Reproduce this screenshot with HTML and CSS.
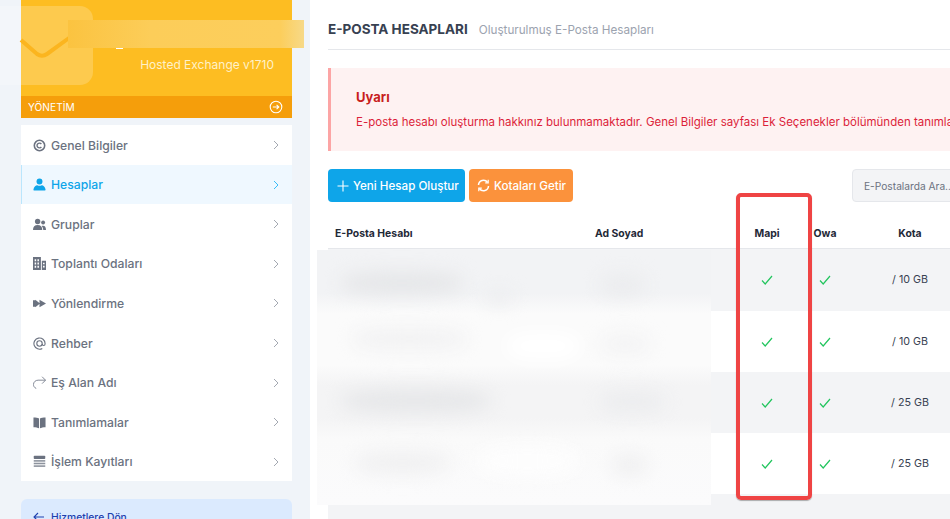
FILE: index.html
```html
<!DOCTYPE html>
<html lang="tr">
<head>
<meta charset="utf-8">
<title>E-Posta Hesapları</title>
<link rel="stylesheet" href="styles.css">
</head>
<body>
<div class="app">
  <aside class="side">
    <svg class="envelope" width="96" height="90" viewBox="0 0 96 90" aria-hidden="true">
      <rect x="-40" y="6" width="133" height="79" rx="13" fill="#fff" fill-opacity=".2"/>
      <path d="M21 40 L37 54 Q42 57.500 47 54 L69 38" fill="none" stroke="#fbb51f" stroke-width="4"/>
    </svg>
    <div class="blur-title"></div>
    <section class="brand">
      <div class="brand-top"><span class="brand-sub">Hosted Exchange v1710</span></div>
      <div class="brand-bar">
        <span>YÖNETİM</span>
        <svg width="14" height="14" viewBox="0 0 14 14" fill="none" stroke="#fff" stroke-width="1.100"><circle cx="7" cy="7" r="5.800"/><path d="M3.800 7h6M7.600 4.900 9.800 7 7.600 9.100"/></svg>
      </div>
    </section>
    <nav class="menu">
      <a class="item"><svg class="ic" viewBox="0 0 14 14" fill="none" stroke="#6b7280"><circle cx="7" cy="7" r="5.600" stroke-width="1.700"/><path d="M9 5.400A2.600 2.600 0 1 0 9 8.600" stroke-width="1.500"/></svg><span>Genel Bilgiler</span><svg class="chev" viewBox="0 0 6 10"><path d="M1 1l4 4-4 4"/></svg></a>
      <a class="item active"><svg class="ic" viewBox="0 0 14 14" fill="#0ea5e9"><circle cx="7" cy="3.800" r="3.200"/><path d="M1.500 13.500c-.8 0-1.100-.5-1-1.200C.9 9.600 2.800 7.800 4.600 7.800c.8.4 1.500.6 2.400.6s1.600-.2 2.400-.6c1.800 0 3.700 1.800 4.100 4.500.1.700-.2 1.200-1 1.200z"/></svg><span>Hesaplar</span><svg class="chev" viewBox="0 0 6 10"><path d="M1 1l4 4-4 4"/></svg></a>
      <a class="item"><svg class="ic" viewBox="0 0 14 14" fill="#6b7280"><circle cx="5" cy="3.800" r="2.900"/><circle cx="10.900" cy="4.800" r="2.100"/><path d="M0 12.800c0-3.600 1.800-5.300 5-5.300s5 1.700 5 5.300z"/><path d="M11 12.800h3c0-2.900-1.100-4.500-3.200-4.500-.6 0-1.100.1-1.500.3.900 1 1.700 2.500 1.700 4.200z"/></svg><span>Gruplar</span><svg class="chev" viewBox="0 0 6 10"><path d="M1 1l4 4-4 4"/></svg></a>
      <a class="item"><svg class="ic" viewBox="0 0 14 14"><path fill="#6b7280" fill-rule="evenodd" d="M0 0h8.500v14H0zM1.800 2.500v2H3.400v-2zM4.800 2.500v2h1.600v-2zM1.800 6v2H3.400V6zM4.800 6v2h1.600V6zM1.800 9.500v2H3.400v-2zM4.800 9.500v2h1.600v-2zM9.500 4H14v10H9.500zM10.800 6.200v1.700h1.700V6.200zM10.800 9.500v1.700h1.700V9.500z"/></svg><span>Toplantı Odaları</span><svg class="chev" viewBox="0 0 6 10"><path d="M1 1l4 4-4 4"/></svg></a>
      <a class="item"><svg class="ic" viewBox="0 0 14 14" fill="#6b7280"><path d="M0 3.500h2.500v7H0zM2.500 3 7.500 7l-5 4zM7 3l7 4-7 4z"/></svg><span>Yönlendirme</span><svg class="chev" viewBox="0 0 6 10"><path d="M1 1l4 4-4 4"/></svg></a>
      <a class="item"><svg class="ic" viewBox="0 0 14 14" fill="none" stroke="#6b7280" stroke-width="1.200"><path d="M10 12.300A6 6 0 1 1 13 7v.6c0 1-.7 1.600-1.500 1.600S10 8.600 10 7.600"/><circle cx="7" cy="7" r="2.900"/></svg><span>Rehber</span><svg class="chev" viewBox="0 0 6 10"><path d="M1 1l4 4-4 4"/></svg></a>
      <a class="item"><svg class="ic" viewBox="0 0 14 14" fill="none" stroke="#7b8290" stroke-width="1"><path d="M3.500 13.500C1.500 12.500.5 11 .5 9.200.5 6.500 2.800 4.500 5.500 4.500h8M9.800.8 13.500 4.500 9.800 8.200"/></svg><span>Eş Alan Adı</span><svg class="chev" viewBox="0 0 6 10"><path d="M1 1l4 4-4 4"/></svg></a>
      <a class="item"><svg class="ic" viewBox="0 0 14 14" fill="#6b7280"><path d="M.5 1.500c2.500 0 4.700.3 6 1.200V13.200c-1.300-.8-3.500-1.200-6-1.200zM13.500 1.500c-2.500 0-4.700.3-6 1.200V13.200c1.300-.8 3.500-1.200 6-1.200z"/></svg><span>Tanımlamalar</span><svg class="chev" viewBox="0 0 6 10"><path d="M1 1l4 4-4 4"/></svg></a>
      <a class="item"><svg class="ic" viewBox="0 0 14 14" fill="#6b7280"><rect x=".8" y=".8" width="12.400" height="3.400" rx=".8"/><rect x=".8" y="5.500" width="12.400" height="1.700" fill="#8d939e"/><rect x=".8" y="8.300" width="12.400" height="1.700" fill="#8d939e"/><rect x=".8" y="11.100" width="12.400" height="1.700" fill="#8d939e"/></svg><span>İşlem Kayıtları</span><svg class="chev" viewBox="0 0 6 10"><path d="M1 1l4 4-4 4"/></svg></a>
    </nav>
    <a class="back"><svg width="12" height="10" viewBox="0 0 12 10" fill="none" stroke="#1e40af" stroke-width="1.100"><path d="M11 5H1M5 1 1 5l4 4"/></svg><span>Hizmetlere Dön</span></a>
  </aside>

  <main class="main">
    <header class="head"><h1>E-POSTA HESAPLARI</h1><span>Oluşturulmuş E-Posta Hesapları</span></header>
    <section class="alert">
      <h2>Uyarı</h2>
      <p>E-posta hesabı oluşturma hakkınız bulunmamaktadır. Genel Bilgiler sayfası Ek Seçenekler bölümünden tanımlama yapabilirsiniz.</p>
    </section>
    <div class="tools">
      <button class="btn blue"><svg width="12" height="12" viewBox="0 0 12 12" stroke="#fff" stroke-width="1.100"><path d="M6 .5v11M.5 6h11"/></svg>Yeni Hesap Oluştur</button>
      <button class="btn orange"><svg width="13" height="13" viewBox="0 0 13 13" fill="none" stroke="#fff" stroke-width="1.500"><path d="M1.500 6A5 5 0 0 1 10.500 3.200M11.500 7A5 5 0 0 1 2.500 9.800"/><path d="M11.200 .8v3H8.200M1.800 12.200v-3h3" stroke-width="1.200"/></svg>Kotaları Getir</button>
      <input class="search" placeholder="E-Postalarda Ara...">
    </div>
    <table class="grid">
      <colgroup><col class="c1"><col class="c2"><col class="c3"><col class="c4"><col class="c5"></colgroup>
      <thead><tr><th class="l">E-Posta Hesabı</th><th class="l">Ad Soyad</th><th>Mapi</th><th>Owa</th><th>Kota</th></tr></thead>
      <tbody>
        <tr><td></td><td></td><td><svg class="ok" viewBox="0 0 12 10"><path d="M1 5.500 4.200 9 11 1"/></svg></td><td><svg class="ok" viewBox="0 0 12 10"><path d="M1 5.500 4.200 9 11 1"/></svg></td><td>/ 10 GB</td></tr>
        <tr><td></td><td></td><td><svg class="ok" viewBox="0 0 12 10"><path d="M1 5.500 4.200 9 11 1"/></svg></td><td><svg class="ok" viewBox="0 0 12 10"><path d="M1 5.500 4.200 9 11 1"/></svg></td><td>/ 10 GB</td></tr>
        <tr><td></td><td></td><td><svg class="ok" viewBox="0 0 12 10"><path d="M1 5.500 4.200 9 11 1"/></svg></td><td><svg class="ok" viewBox="0 0 12 10"><path d="M1 5.500 4.200 9 11 1"/></svg></td><td>/ 25 GB</td></tr>
        <tr><td></td><td></td><td><svg class="ok" viewBox="0 0 12 10"><path d="M1 5.500 4.200 9 11 1"/></svg></td><td><svg class="ok" viewBox="0 0 12 10"><path d="M1 5.500 4.200 9 11 1"/></svg></td><td>/ 25 GB</td></tr>
        <tr class="tail"><td colspan="5"></td></tr>
      </tbody>
    </table>
  </main>

  <div class="redact">
    <i class="smear w1"></i><i class="smear w2"></i>
    <i class="smear s1"></i><i class="smear s1b"></i><i class="smear s2"></i><i class="smear s3"></i><i class="smear s4"></i>
    <i class="smear n1"></i><i class="smear n2"></i><i class="smear n3"></i><i class="smear n4"></i>
  </div>
  <div class="marker"></div>
</div>
</body>
</html>
```
FILE: styles.css
```css
* { box-sizing: border-box; }
html, body { margin: 0; height: 100%; }
body { overflow: hidden; background: #fff; font-family: Inter, "Liberation Sans", sans-serif; }
.app { position: relative; display: flex; width: 950px; height: 519px; overflow: hidden; }

.side { position: relative; flex: 0 0 310px; height: 519px; padding: 0 18px 0 21px; background: #f0f4f9; }
.envelope { position: absolute; left: 0; top: 0; z-index: 1; }
.brand { background: #fdbd22; }
.brand-top { height: 96px; padding: 53px 18px 0 0; text-align: right; }
.brand-sub { position: relative; z-index: 2; font-size: 12px; line-height: 18px; color: #fff1c9; }
.brand-bar { display: flex; align-items: center; justify-content: space-between; height: 22px; padding: 0 9px 0 7px; background: #f59e0b; color: #fff; font-size: 10.2px; }
.blur-title { position: absolute; z-index: 2; left: 68px; top: 20px; width: 236px; height: 28px; background: linear-gradient(90deg, #fbc340 0, #fccd59 35%, #fcce5c 90%, #f7d988 100%); }
.blur-title::after { content: ""; position: absolute; left: 48px; bottom: -1px; width: 7px; height: 1px; background: #fff; }

.menu { display: grid; grid-template-rows: repeat(9, 1fr); height: 356px; margin-top: 7px; background: #fff; }
.item { display: flex; align-items: center; padding: 1px 13px 0 11px; border-left: 1px solid transparent; color: #6b7280; font-size: 12.2px; font-weight: 500; }
.item span { flex: 1; margin-left: 5px; }
.ic { width: 13px; height: 13px; flex: none; }
.chev { width: 6px; height: 10px; flex: none; fill: none; stroke: #a3a8b1; stroke-width: 1; }
.item.active { background: #eff8ff; border-left-color: #bae6fd; color: #0ea5e9; }
.item.active .chev { stroke: #38bdf8; }
.back { display: flex; align-items: flex-start; gap: 6px; height: 20px; margin-top: 18px; padding: 11px 0 0 12px; border-radius: 6px 6px 0 0; background: #dbeafe; color: #1e40af; font-size: 10.300px; font-weight: 500; line-height: 14px; }
.back svg { margin-top: 2px; }

.main { flex: 1; min-width: 0; padding: 0 0 0 18px; }
.head { display: flex; align-items: baseline; gap: 11px; height: 50px; padding-top: 20px; border-bottom: 1px solid #e5e7eb; white-space: nowrap; }
.head h1 { margin: 0; font-size: 13.500px; line-height: 18px; font-weight: 700; color: #374151; }
.head span { font-size: 11.700px; color: #9ca3af; }
.alert { height: 83px; margin-top: 18px; padding: 21px 0 0 25px; border-left: 3px solid #fca5a5; background: #fef2f2; white-space: nowrap; overflow: hidden; }
.alert h2 { margin: 0 0 9px; font-size: 13px; line-height: 16px; font-weight: 700; color: #c81e1e; }
.alert p { margin: 0; font-size: 11.500px; line-height: 17px; color: #dc1f3a; }
.tools { display: flex; gap: 4px; margin-top: 18px; height: 33px; }
.btn { display: flex; align-items: center; flex: none; height: 33px; padding: 0 0 0 9px; border: 0; border-radius: 4px; color: #fff; font: 500 11.600px Inter, sans-serif; white-space: nowrap; }
.btn svg { flex: none; }
.btn.blue { width: 137px; gap: 4px; background: #0ea5e9; }
.btn.orange { width: 104px; gap: 4px; padding-left: 8px; background: #fb923c; }
.search { flex: 0 0 140px; margin-left: 275px; height: 33px; padding: 0 11px; border: 1px solid #e5e7eb; border-radius: 4px; background: #f3f4f6; font: 400 10.200px Inter, sans-serif; }
.search::placeholder { color: #6b7280; opacity: 1; }

.grid { width: 638px; margin-top: 15px; border-collapse: collapse; table-layout: fixed; }
.c1 { width: 260px; } .c2 { width: 150px; } .c3, .c4 { width: 58px; } .c5 { width: 112px; }
th { height: 31px; padding: 3px 0 0; border-bottom: 1px solid #e5e7eb; font-size: 10.400px; font-weight: 700; color: #1f2937; text-align: center; }
th.l { padding-left: 7px; text-align: left; }
td { height: 61px; padding: 0; text-align: center; font-size: 10.700px; color: #374151; }
tbody tr:first-child td { height: 63px; }
tbody tr:nth-child(odd) { background: #f3f4f6; }
.ok { display: block; width: 12px; height: 10px; margin: 0 auto; fill: none; stroke: #22c55e; stroke-width: 1.200; }

.redact { position: absolute; left: 317px; top: 250px; width: 394px; height: 255px; overflow: hidden; background: linear-gradient(180deg, #f2f3f5 0, #f2f3f5 17%, #fbfbfb 25%, #fbfbfb 45%, #f4f4f5 53%, #f4f4f5 66%, #fafafa 74%, #fbfbfc 100%); }
.smear { position: absolute; border-radius: 40%; filter: blur(9px); }
.w1 { left: 188px; top: 82px; width: 76px; height: 28px; background: #fff; }
.w2 { left: 158px; top: 195px; width: 105px; height: 32px; background: #fdfdfd; }
.s1 { left: 24px; top: 22px; width: 122px; height: 22px; background: #e5e6e8; }
.s1b { left: 168px; top: 42px; width: 28px; height: 12px; background: #ebecee; }
.s2 { left: 35px; top: 78px; width: 115px; height: 22px; background: #f2f2f3; }
.s3 { left: 24px; top: 140px; width: 150px; height: 22px; background: #e5e6e8; }
.s4 { left: 38px; top: 202px; width: 95px; height: 22px; background: #f0f0f1; }
.n1 { left: 283px; top: 24px; width: 45px; height: 22px; background: #ebecee; }
.n2 { left: 283px; top: 84px; width: 50px; height: 20px; background: #f3f3f4; }
.n3 { left: 283px; top: 142px; width: 65px; height: 20px; background: #ebecee; }
.n4 { left: 295px; top: 205px; width: 35px; height: 20px; background: #efeff0; }

.marker { position: absolute; left: 736px; top: 193px; width: 76px; height: 307px; border: 4px solid #ef4444; border-radius: 5px; box-shadow: 0 1px 1px rgba(0,0,0,.3); }
```
